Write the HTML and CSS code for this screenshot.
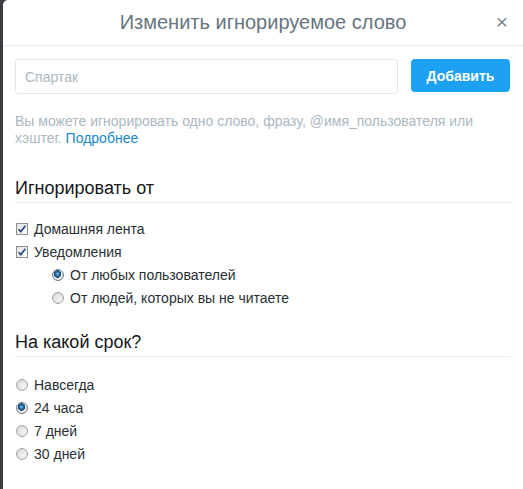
FILE: index.html
```html
<!DOCTYPE html>
<html lang="ru">
<head>
<meta charset="utf-8">
<link rel="stylesheet" href="styles.css">
</head>
<body>
<div class="modal">
  <div class="header">
    <h2 class="title">Изменить игнорируемое слово</h2>
    <span class="close">&times;</span>
  </div>
  <div class="content">
    <div class="row">
      <input class="field" type="text" placeholder="Спартак">
      <button class="btn">Добавить</button>
    </div>
    <p class="hint">Вы можете игнорировать одно слово, фразу, @имя_пользователя или хэштег. <a class="link" href="#">Подробнее</a></p>

    <h3 class="section">Игнорировать от</h3>
    <ul class="options first">
      <li class="opt"><span class="check"><svg viewBox="0 0 12 12" width="12" height="12"><path d="M2.6 6.2 L4.8 8.6 L9.4 2.8" fill="none" stroke="#2a4a86" stroke-width="1.7"/></svg></span>Домашняя лента</li>
      <li class="opt"><span class="check"><svg viewBox="0 0 12 12" width="12" height="12"><path d="M2.6 6.2 L4.8 8.6 L9.4 2.8" fill="none" stroke="#2a4a86" stroke-width="1.7"/></svg></span>Уведомления</li>
      <li class="opt sub"><span class="radio on"></span>От любых пользователей</li>
      <li class="opt sub"><span class="radio"></span>От людей, которых вы не читаете</li>
    </ul>

    <h3 class="section">На какой срок?</h3>
    <ul class="options">
      <li class="opt"><span class="radio"></span>Навсегда</li>
      <li class="opt"><span class="radio on"></span>24 часа</li>
      <li class="opt"><span class="radio"></span>7 дней</li>
      <li class="opt"><span class="radio"></span>30 дней</li>
    </ul>
  </div>
</div>
</body>
</html>
```

FILE: styles.css
```css
html, body {
  margin: 0;
  height: 100%;
}
body {
  background: #3b3f44;
  font-family: "Liberation Sans", Arial, sans-serif;
  color: #14171a;
  display: flex;
}
.modal {
  margin-left: 3px;
  flex: 1;
  background: #fff;
  border-top-left-radius: 5px;
  min-height: 489px;
}
.header {
  position: relative;
  height: 45px;
  border-bottom: 1px solid #e6ecf0;
}
.title {
  margin: 0;
  font-size: 20px;
  font-weight: normal;
  line-height: 45px;
  text-align: center;
  color: #66757f;
}
.close {
  position: absolute;
  right: 15px;
  top: 11px;
  font-size: 21px;
  line-height: 22px;
  color: #7a8791;
}
.content {
  padding: 13px 12px 0 12px;
}
.row {
  display: flex;
  gap: 13px;
  align-items: flex-start;
}
.field {
  box-sizing: border-box;
  width: 383px;
  height: 35px;
  border: 1px solid #e1e8ed;
  border-radius: 3px;
  padding: 0 9px;
  font-family: inherit;
  font-size: 14px;
  outline: none;
}
.field::placeholder {
  color: #aab8c2;
}
.btn {
  width: 99px;
  height: 33px;
  border: none;
  border-radius: 4px;
  background: #1da1f2;
  color: #fff;
  font-family: inherit;
  font-size: 14px;
  font-weight: bold;
}
.hint {
  margin: 19px 0 0 0;
  font-size: 14px;
  line-height: 17px;
  color: #aab8c2;
}
.link {
  color: #1b88c9;
  text-decoration: none;
}
.section {
  margin: 30px 0 0 0;
  padding-bottom: 3px;
  font-size: 18px;
  font-weight: normal;
  line-height: 22px;
  color: #14171a;
  border-bottom: 1px solid #e6ecf0;
}
.options {
  list-style: none;
  margin: 16px 0 0 0;
  padding: 0;
}
.options.first {
  margin-top: 14px;
}
.opt {
  display: flex;
  align-items: center;
  gap: 6px;
  height: 23px;
  font-size: 14px;
  color: #292f33;
  padding-left: 1px;
}
.opt.sub {
  padding-left: 37px;
}
.options + .section {
  margin-top: 22px;
}
.check {
  box-sizing: border-box;
  width: 12px;
  height: 12px;
  border: 1px solid #8e8f8f;
  background: linear-gradient(135deg, #e2e2e2, #fdfdfd);
  display: flex;
}
.check svg {
  margin: -1px;
}
.radio {
  box-sizing: border-box;
  width: 12px;
  height: 12px;
  border-radius: 50%;
  border: 1px solid #a3a3a3;
  background: radial-gradient(circle at 65% 65%, #f4f4f4, #d6d6d6);
}
.radio.on {
  border-color: #6e7c8a;
  background: radial-gradient(circle at 45% 40%, #7fc3f0 0, #1d5f96 2.5px, #153e66 3.5px, #f0f0f0 4px, #dcdcdc 6px);
}
```
